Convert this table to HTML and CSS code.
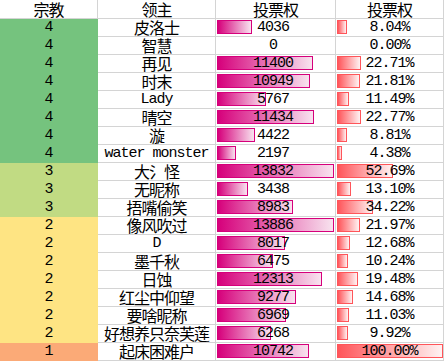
FILE: index.html
```html
<!DOCTYPE html>
<html lang="zh">
<head>
<meta charset="utf-8">
<link rel="stylesheet" href="styles.css">
</head>
<body>
<div class="sheet">
  <div class="c hd">宗教</div><div class="c hd">领主</div><div class="c hd">投票权</div><div class="c hd">投票权</div>

  <div class="c rel r4 n">4</div><div class="c">皮洛士</div>
  <div class="c bc"><div class="bar pk" style="width:35px"></div><span class="n v">4036</span></div>
  <div class="c pc"><div class="bar rd" style="width:10px"></div><span class="n">8.04%</span></div>

  <div class="c rel r4 n">4</div><div class="c">智慧</div>
  <div class="c bc"><span class="n v">0</span></div>
  <div class="c pc"><span class="n">0.00%</span></div>

  <div class="c rel r4 n">4</div><div class="c">再见</div>
  <div class="c bc"><div class="bar pk" style="width:96px"></div><span class="n v">11400</span></div>
  <div class="c pc"><div class="bar rd" style="width:24px"></div><span class="n">22.71%</span></div>

  <div class="c rel r4 n">4</div><div class="c">时末</div>
  <div class="c bc"><div class="bar pk" style="width:93px"></div><span class="n v">10949</span></div>
  <div class="c pc"><div class="bar rd" style="width:23px"></div><span class="n">21.81%</span></div>

  <div class="c rel r4 n">4</div><div class="c n">Lady</div>
  <div class="c bc"><div class="bar pk" style="width:49px"></div><span class="n v">5767</span></div>
  <div class="c pc"><div class="bar rd" style="width:12px"></div><span class="n">11.49%</span></div>

  <div class="c rel r4 n">4</div><div class="c">晴空</div>
  <div class="c bc"><div class="bar pk" style="width:97px"></div><span class="n v">11434</span></div>
  <div class="c pc"><div class="bar rd" style="width:24px"></div><span class="n">22.77%</span></div>

  <div class="c rel r4 n">4</div><div class="c">漩</div>
  <div class="c bc"><div class="bar pk" style="width:38px"></div><span class="n v">4422</span></div>
  <div class="c pc"><div class="bar rd" style="width:10px"></div><span class="n">8.81%</span></div>

  <div class="c rel r4 n">4</div><div class="c n">water monster</div>
  <div class="c bc"><div class="bar pk" style="width:19px"></div><span class="n v">2197</span></div>
  <div class="c pc"><div class="bar rd" style="width:5px"></div><span class="n">4.38%</span></div>

  <div class="c rel r3 n">3</div><div class="c">大氵怪</div>
  <div class="c bc"><div class="bar pk" style="width:117px"></div><span class="n v">13832</span></div>
  <div class="c pc"><div class="bar rd" style="width:56px"></div><span class="n">52.69%</span></div>

  <div class="c rel r3 n">3</div><div class="c">无昵称</div>
  <div class="c bc"><div class="bar pk" style="width:31px"></div><span class="n v">3438</span></div>
  <div class="c pc"><div class="bar rd" style="width:14px"></div><span class="n">13.10%</span></div>

  <div class="c rel r3 n">3</div><div class="c">捂嘴偷笑</div>
  <div class="c bc"><div class="bar pk" style="width:76px"></div><span class="n v">8983</span></div>
  <div class="c pc"><div class="bar rd" style="width:36px"></div><span class="n">34.22%</span></div>

  <div class="c rel r2 n">2</div><div class="c">像风吹过</div>
  <div class="c bc"><div class="bar pk" style="width:117px"></div><span class="n v">13886</span></div>
  <div class="c pc"><div class="bar rd" style="width:23px"></div><span class="n">21.97%</span></div>

  <div class="c rel r2 n">2</div><div class="c n">D</div>
  <div class="c bc"><div class="bar pk" style="width:68px"></div><span class="n v">8017</span></div>
  <div class="c pc"><div class="bar rd" style="width:13px"></div><span class="n">12.68%</span></div>

  <div class="c rel r2 n">2</div><div class="c">墨千秋</div>
  <div class="c bc"><div class="bar pk" style="width:56px"></div><span class="n v">6475</span></div>
  <div class="c pc"><div class="bar rd" style="width:11px"></div><span class="n">10.24%</span></div>

  <div class="c rel r2 n">2</div><div class="c">日蚀</div>
  <div class="c bc"><div class="bar pk" style="width:105px"></div><span class="n v">12313</span></div>
  <div class="c pc"><div class="bar rd" style="width:21px"></div><span class="n">19.48%</span></div>

  <div class="c rel r2 n">2</div><div class="c">红尘中仰望</div>
  <div class="c bc"><div class="bar pk" style="width:79px"></div><span class="n v">9277</span></div>
  <div class="c pc"><div class="bar rd" style="width:16px"></div><span class="n">14.68%</span></div>

  <div class="c rel r2 n">2</div><div class="c">要啥昵称</div>
  <div class="c bc"><div class="bar pk" style="width:69px"></div><span class="n v">6969</span></div>
  <div class="c pc"><div class="bar rd" style="width:12px"></div><span class="n">11.03%</span></div>

  <div class="c rel r2 n">2</div><div class="c">好想养只奈芙莲</div>
  <div class="c bc"><div class="bar pk" style="width:54px"></div><span class="n v">6268</span></div>
  <div class="c pc"><div class="bar rd" style="width:11px"></div><span class="n">9.92%</span></div>

  <div class="c rel r1 n">1</div><div class="c">起床困难户</div>
  <div class="c bc"><div class="bar pk" style="width:92px"></div><span class="n v">10742</span></div>
  <div class="c pc"><div class="bar rd" style="width:106px"></div><span class="n">100.00%</span></div>
</div>
</body>
</html>
```
FILE: styles.css
```css
html, body {
  margin: 0;
  padding: 0;
  background: #ffffff;
}

.sheet {
  display: grid;
  grid-template-columns: 98px 118px 120px 108px;
  grid-template-rows: 19px repeat(19, 18px);
  width: 444px;
  font-family: "Noto Sans CJK SC", "Liberation Mono", sans-serif;
  font-size: 16px;
  letter-spacing: -1px;
  color: #000;
}

.c {
  box-sizing: border-box;
  border-right: 1px solid #d4d4d4;
  border-bottom: 1px solid #d4d4d4;
  display: flex;
  align-items: center;
  justify-content: center;
  white-space: nowrap;
  line-height: 17px;
}

.hd {
  line-height: 18px;
}

.n {
  font-family: "Liberation Mono", "Noto Sans CJK SC", monospace;
  font-size: 15px;
  letter-spacing: -1px;
}

.rel { border-color: transparent; }
.r4 { background: #75c37e; }
.r3 { background: #c1db83; }
.r2 { background: #fee483; }
.r1 { background: #fbaa77; }

.bc, .pc {
  display: grid;
  grid-template-columns: 1fr;
  grid-template-rows: 17px;
  align-items: start;
  justify-items: stretch;
}

.bc > *, .pc > * {
  grid-area: 1 / 1;
}

.bar {
  box-sizing: border-box;
  height: 14px;
  margin-top: 1px;
  margin-left: 1px;
  justify-self: start;
}

.pk {
  border: 1px solid #d6007b;
  background: linear-gradient(to right, #d6007b, #f8e3ef);
}

.rd {
  border: 1px solid #ff555a;
  background: linear-gradient(to right, #ff555a, #fff2f2);
}

.bc > span, .pc > span {
  text-align: center;
  line-height: 17px;
  position: relative;
}

.bc > span.v {
  padding-right: 5px;
}
```
